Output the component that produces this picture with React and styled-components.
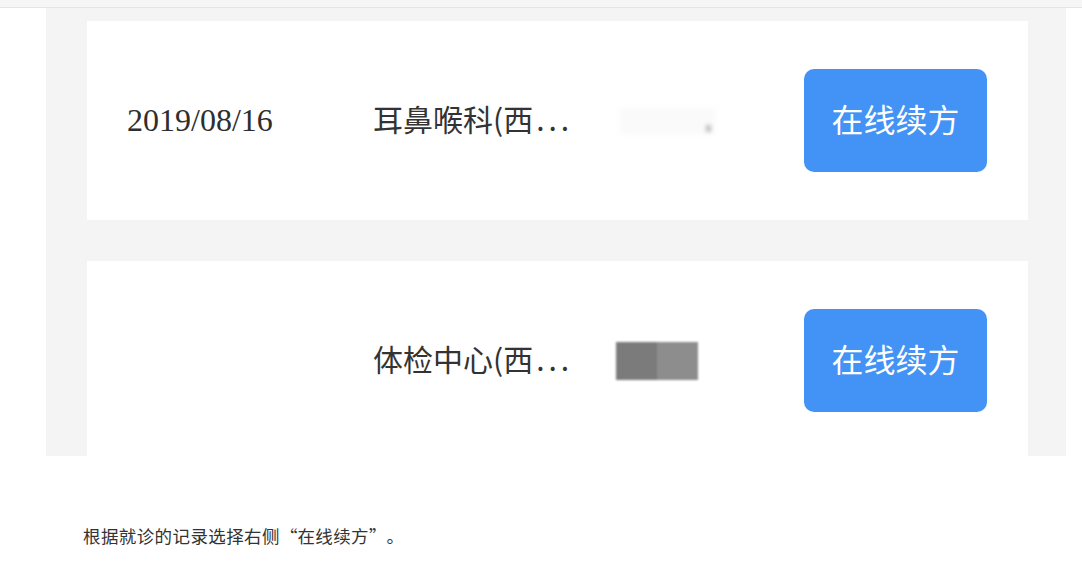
import React from 'react';
import styled, { createGlobalStyle } from 'styled-components';

const GlobalStyle = createGlobalStyle`
    body {
        margin: 0;
        background: #ffffff;
        font-family: 'Noto Sans CJK SC', 'Noto Sans', sans-serif;
    }
`

const records = [
    { date: '2019/08/16', dept: '耳鼻喉科(西', mask: 'light' },
    { date: '', dept: '体检中心(西', mask: 'dark' },
]

const App = () => {
    return (
        <>
            <GlobalStyle />
            <TopBar />
            <Panel>
                {records.map((r, i) => (
                    <Card key={i}>
                        <DateCell>{r.date}</DateCell>
                        <DeptCell>{r.dept}<Dots>...</Dots></DeptCell>
                        {r.mask === 'dark' ? (
                            <Mask>
                                <MaskPart tone="#7b7b7b" />
                                <MaskPart tone="#8d8d8d" />
                            </Mask>
                        ) : (
                            <FaintMask>
                                <Dot />
                            </FaintMask>
                        )}
                        <RenewButton>在线续方</RenewButton>
                    </Card>
                ))}
            </Panel>
            <Caption>
                根据就诊的记录选择右侧<Quote side="right">“</Quote>在线续方<Quote side="left">”</Quote>。
            </Caption>
        </>
    );
};

const TopBar = styled.div`
    height: 7px;
    background: #f6f6f6;
    border-bottom: 1px solid #e4e4e4;
`
const Panel = styled.div`
    margin-left: 46px;
    width: 1020px;
    height: 448px;
    overflow: hidden;
    background: #f4f4f4;
    padding: 13px 38px 0 41px;
    box-sizing: border-box;
    display: flex;
    flex-direction: column;
    gap: 41px;
`
const Card = styled.div`
    flex-shrink: 0;
    height: 199px;
    background: #ffffff;
    display: flex;
    align-items: center;
    padding: 0 41px 0 40px;
`
const DateCell = styled.div`
    width: 246px;
    font-family: 'Liberation Serif', serif;
    font-size: 32px;
    color: #2e2e2e;
`
const DeptCell = styled.div`
    width: 243px;
    font-size: 30px;
    line-height: 1;
    padding-bottom: 6px;
    color: #333333;
    white-space: nowrap;
`
const Dots = styled.span`
    margin-left: 3px;
    letter-spacing: 4px;
`
const Mask = styled.div`
    display: flex;
    width: 82px;
    height: 38px;
    filter: blur(1px);
`
const MaskPart = styled.div`
    flex: 1;
    background: ${p => p.tone};
`
const FaintMask = styled.div`
    position: relative;
    width: 95px;
    height: 26px;
    margin-left: 4px;
    background: #fafafa;
    filter: blur(2px);
`
const Dot = styled.div`
    position: absolute;
    right: 4px;
    bottom: 2px;
    width: 5px;
    height: 7px;
    background: #bbbbbb;
`
const RenewButton = styled.button`
    margin-left: auto;
    width: 183px;
    height: 103px;
    border: none;
    border-radius: 10px;
    background: #4293f5;
    color: #ffffff;
    font-family: 'Noto Sans CJK SC', sans-serif;
    font-size: 32px;
    line-height: 1;
    padding: 0 0 6px;
`
const Caption = styled.p`
    margin: 0;
    padding: 68px 0 0 83px;
    font-size: 17.5px;
    letter-spacing: 0.4px;
    line-height: 24px;
    color: #333333;
`
const Quote = styled.span`
    display: inline-block;
    width: 1em;
    text-align: ${p => p.side};
`

export default App;
